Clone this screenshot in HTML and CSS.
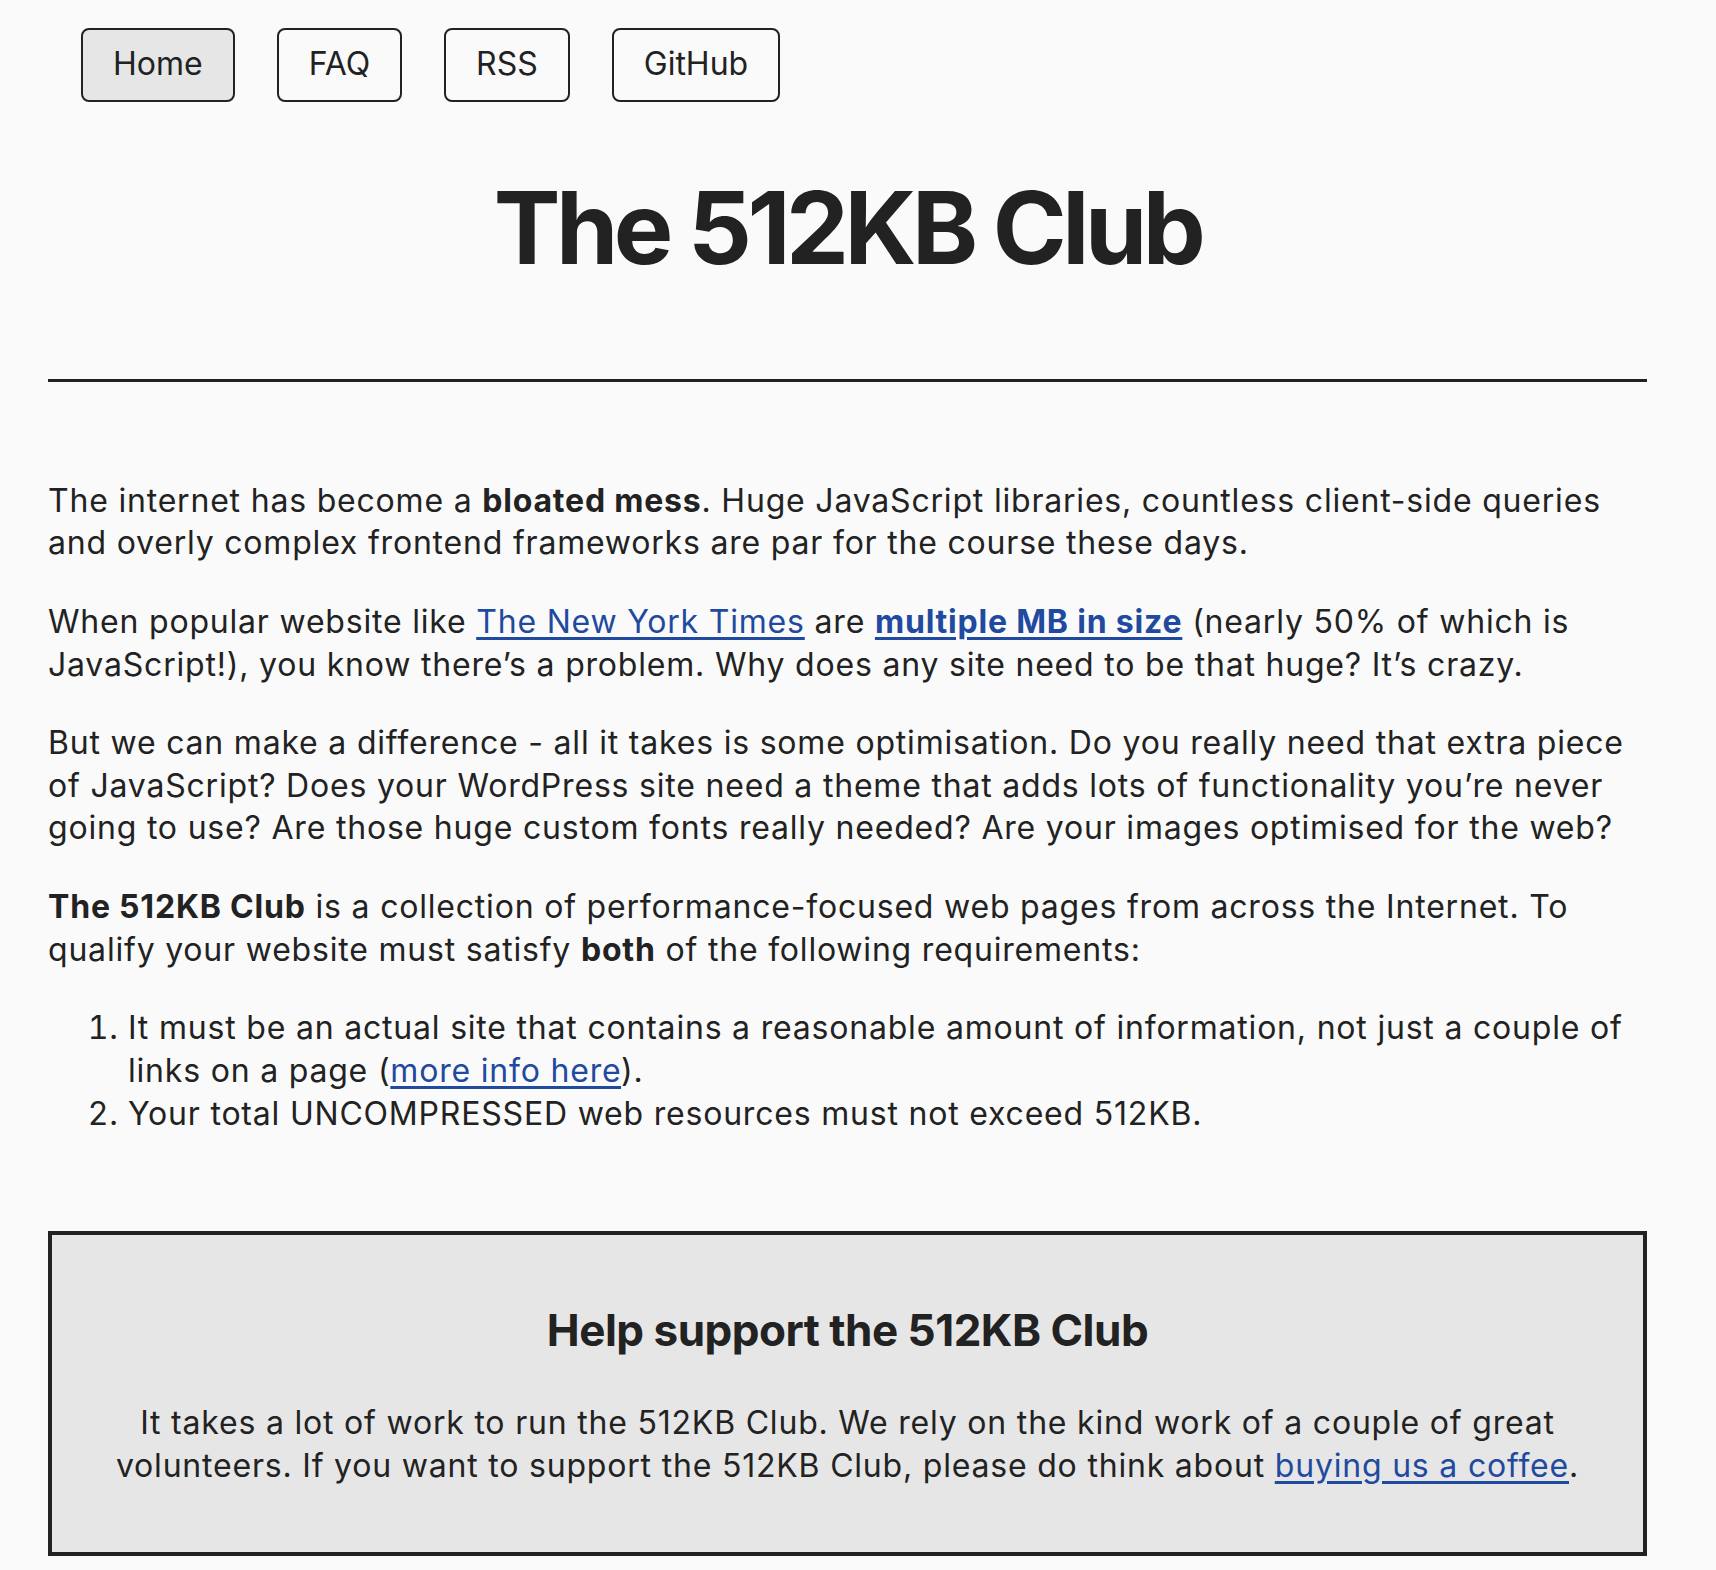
FILE: index.html
```html
<!DOCTYPE html>
<html lang="en">
<head>
<meta charset="utf-8">
<title>The 512KB Club</title>
<link rel="stylesheet" href="styles.css">
</head>
<body>
<div class="page">
  <nav class="nav">
    <a class="btn btn-active" href="#">Home</a>
    <a class="btn" href="#">FAQ</a>
    <a class="btn" href="#">RSS</a>
    <a class="btn" href="#">GitHub</a>
  </nav>
  <h1 class="title">The 512KB Club</h1>
  <hr class="rule">
  <main class="content">
    <p>The internet has become a <strong>bloated mess</strong>. Huge JavaScript libraries, countless client-side queries and overly complex frontend frameworks are par for the course these days.</p>
    <p>When popular website like <a class="link" href="#">The New York Times</a> are <a class="link" href="#"><strong>multiple MB in size</strong></a> (nearly 50% of which is JavaScript!), you know there’s a problem. Why does any site need to be that huge? It’s crazy.</p>
    <p>But we can make a difference - all it takes is some optimisation. Do you really need that extra piece of JavaScript? Does your WordPress site need a theme that adds lots of functionality you’re never going to use? Are those huge custom fonts really needed? Are your images optimised for the web?</p>
    <p><strong>The 512KB Club</strong> is a collection of performance-focused web pages from across the Internet. To qualify your website must satisfy <strong>both</strong> of the following requirements:</p>
    <ol class="reqs">
      <li>It must be an actual site that contains a reasonable amount of information, not just a couple of links on a page (<a class="link" href="#">more info here</a>).</li>
      <li>Your total UNCOMPRESSED web resources must not exceed 512KB.</li>
    </ol>
  </main>
  <section class="support">
    <h2 class="support-title">Help support the 512KB Club</h2>
    <p class="support-text">It takes a lot of work to run the 512KB Club. We rely on the kind work of a couple of great volunteers. If you want to support the 512KB Club, please do think about <a class="link" href="#">buying us a coffee</a>.</p>
  </section>
</div>
</body>
</html>
```
FILE: styles.css
```css
html, body {
  margin: 0;
  padding: 0;
  background: #fafafa;
}
body {
  font-family: Inter, "Noto Sans", "Liberation Sans", sans-serif;
  color: #222;
  font-size: 32px;
  line-height: 1.333;
  letter-spacing: 0.8px;
}
.page {
  width: 1599px;
  padding: 28px 0 0 48px;
}
.nav {
  display: flex;
  gap: 42px;
  padding-left: 33px;
  letter-spacing: 0;
}
.btn {
  display: block;
  border: 2px solid #222;
  border-radius: 8px;
  padding: 13px 30px 14px;
  color: #222;
  text-decoration: none;
  background: #fafafa;
}
.btn-active {
  background: #e6e6e6;
}
.title {
  text-align: center;
  font-size: 100px;
  font-weight: 700;
  letter-spacing: -4.5px;
  line-height: 1.2;
  margin: 66px 0 0;
}
.rule {
  border: 0;
  border-top: 3px solid #222;
  margin: 91px 0 0;
}
.content {
  padding-top: 98px;
}
.content p {
  margin: 0 0 36px;
}
.link {
  color: #1f4a9f;
  text-decoration: underline;
  text-underline-offset: 4px;
}
.reqs {
  margin: 0;
  padding-left: 80px;
}
.support {
  margin-top: 96px;
  border: 4px solid #222;
  background: #e6e6e6;
  padding: 41px 50px 65px;
  text-align: center;
}
.support-title {
  font-size: 44px;
  font-weight: 700;
  margin: 28px 0 45px;
  letter-spacing: -0.5px;
  line-height: 1.2;
}
.support-text {
  margin: 0;
}
```
